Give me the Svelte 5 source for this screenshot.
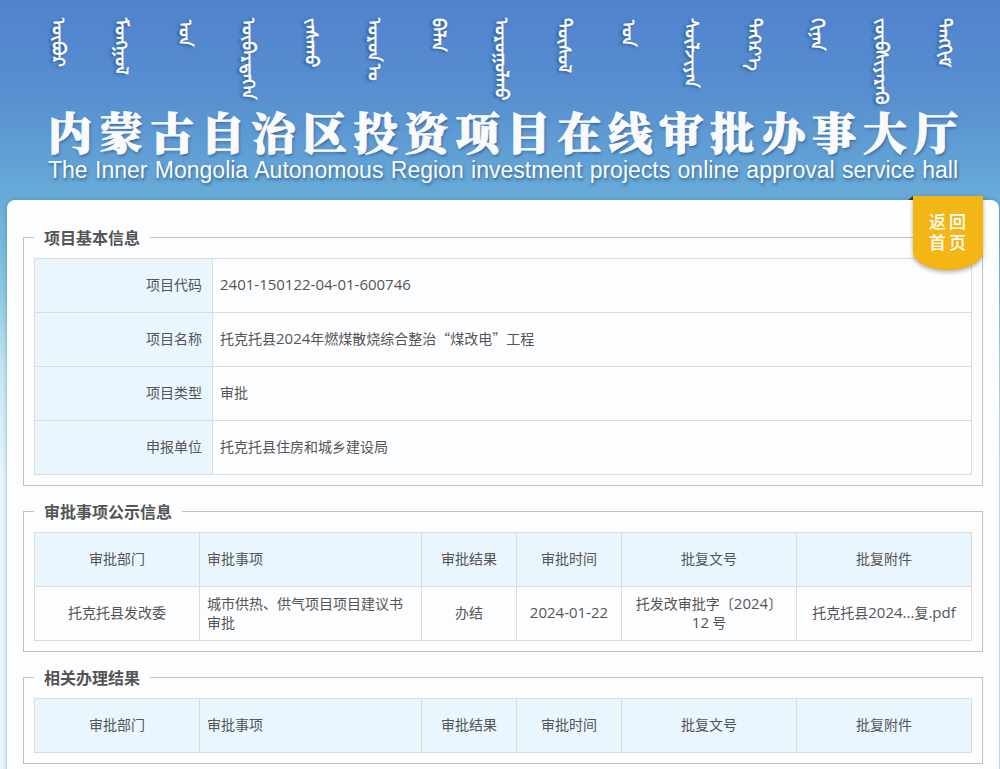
<script>
  const words = [
    'ᠥᠪᠥᠷ', 'ᠮᠣᠩᠭᠣᠯ', '\u202Fᠤᠨ', 'ᠥᠪᠡᠷᠲᠡᠭᠡᠨ', 'ᠵᠠᠰᠠᠬᠤ',
    'ᠣᠷᠣᠨ\u202Fᠤ', 'ᠪᠡᠯᠡᠨ', 'ᠣᠷᠣᠭᠤᠯᠬᠤ', 'ᠲᠥᠰᠥᠯ', '\u202Fᠤᠨ',
    'ᠰᠦᠯᠵᠢᠶᠡᠨ', 'ᠳᠡᠭᠡᠷ᠎ᠡ', 'ᠬᠢᠨᠠᠨ', 'ᠵᠥᠪᠰᠢᠶᠡᠷᠡᠬᠦ', 'ᠲᠠᠩᠬᠢᠮ'
  ];

  const columns = ['审批部门', '审批事项', '审批结果', '审批时间', '批复文号', '批复附件'];
</script>

{#snippet head()}
  <colgroup>
    <col class="dept" /><col /><col class="result" /><col class="date" /><col class="doc" /><col class="doc" />
  </colgroup>
  <thead>
    <tr>
      {#each columns as name}<th scope="col">{name}</th>{/each}
    </tr>
  </thead>
{/snippet}

<div class="page">
  <header>
    <p class="mongolian" lang="mn-Mong">
      {#each words as word}<span>{word}</span>{/each}
    </p>
    <h1>内蒙古自治区投资项目在线审批办事大厅</h1>
    <p class="english" lang="en">The Inner Mongolia Autonomous Region investment projects online approval service hall</p>
  </header>

  <main>
    <a class="ribbon" href="#home">返回<br />首页</a>

    <fieldset>
      <legend>项目基本信息</legend>
      <table class="info">
        <tbody>
          <tr><th scope="row">项目代码</th><td><span class="num">2401-150122-04-01-600746</span></td></tr>
          <tr><th scope="row">项目名称</th><td>托克托县<span class="num">2024</span>年燃煤散烧综合整治“煤改电”工程</td></tr>
          <tr><th scope="row">项目类型</th><td>审批</td></tr>
          <tr><th scope="row">申报单位</th><td>托克托县住房和城乡建设局</td></tr>
        </tbody>
      </table>
    </fieldset>

    <fieldset>
      <legend>审批事项公示信息</legend>
      <table class="list">
        {@render head()}
        <tbody>
          <tr>
            <td>托克托县发改委</td>
            <td>城市供热、供气项目项目建议书审批</td>
            <td>办结</td>
            <td><span class="num">2024-01-22</span></td>
            <td>托发改审批字〔<span class="num">2024</span>〕<span class="num">12</span> 号</td>
            <td><a href="#file">托克托县<span class="num">2024...</span>复<span class="num">.pdf</span></a></td>
          </tr>
        </tbody>
      </table>
    </fieldset>

    <fieldset>
      <legend>相关办理结果</legend>
      <table class="list">
        {@render head()}
      </table>
    </fieldset>
  </main>
</div>

<style>
  :global(body) {
    margin: 0;
    background: #e9f6fe;
  }

  .page {
    display: flex;
    flex-direction: column;
    box-sizing: border-box;
    min-height: 100vh;
    padding: 0 1px 0 7px;
    background: linear-gradient(#5182ce 0, #5890d0 100px, #68acd8 200px, #8cc8e2 290px, #c4e7f0 370px, #e9f6fe 480px);
    color: #555;
    font: 14px/19px "Noto Sans CJK SC", sans-serif;
  }

  header {
    box-sizing: border-box;
    height: 200px;
    padding: 18px 41px 0;
    color: #fafafa;
    text-shadow: 1px 2px 3px #1d4a80b0;
  }

  .mongolian {
    display: flex;
    justify-content: space-between;
    height: 88px;
    margin: 0;
    font-size: 18px;
    font-weight: 700;
    line-height: 24px;
  }

  .mongolian span {
    writing-mode: vertical-lr;
    white-space: nowrap;
  }

  h1 {
    margin: 0;
    font: 900 44px/50px "Noto Serif CJK SC", "Noto Sans CJK SC", serif;
    text-align-last: justify;
    -webkit-text-stroke: 1px #fafafa;
  }

  .english {
    margin: 0;
    font: 23px/28px "Liberation Sans", Arial, sans-serif;
    text-align-last: justify;
    white-space: nowrap;
  }

  main {
    position: relative;
    flex: 1;
    padding: 26px 16px 16px;
    border-radius: 8px 8px 0 0;
    background: #fcfdff;
    box-shadow: 0 0 4px #2c6a9a80;
  }

  fieldset {
    min-width: 0;
    margin: 0 0 14px;
    padding: 10px;
    border: 1px solid #c0c0c0;
  }

  legend {
    padding: 0 10px;
    font-size: 16px;
    font-weight: 700;
    line-height: 22px;
  }

  table {
    width: 100%;
    border-collapse: collapse;
    table-layout: fixed;
  }

  th,
  td {
    box-sizing: border-box;
    height: 54px;
    padding: 0 7px 2px;
    border: 1px solid #dcdcdc;
    font-weight: 400;
  }

  th {
    background: #e9f6fe;
  }

  .info th {
    width: 178px;
    padding-right: 10px;
    text-align: right;
  }

  .list th,
  .list td {
    text-align: center;
  }

  .list th:nth-child(2),
  .list td:nth-child(2) {
    text-align: left;
  }

  .dept { width: 165px; }
  .result { width: 95px; }
  .date { width: 105px; }
  .doc { width: 175px; }

  td a {
    color: inherit;
    text-decoration: none;
  }

  .num {
    font-family: "Open Sans", sans-serif;
    font-size: 15px;
  }

  .ribbon {
    position: absolute;
    top: -4px;
    right: 16px;
    box-sizing: border-box;
    width: 70px;
    height: 74px;
    padding: 14px 17px 0 16px;
    border-radius: 0 0 35px 35px / 0 0 18px 18px;
    background: #f4b614;
    box-shadow: 0 2px 4px #00000050;
    color: #fff;
    font-size: 17px;
    font-weight: 500;
    line-height: 21px;
    text-align: justify;
    text-align-last: justify;
    text-decoration: none;
  }

  .ribbon::before {
    content: "";
    position: absolute;
    top: 0;
    left: -5px;
    border-bottom: 4px solid #4a3505;
    border-left: 5px solid transparent;
  }
</style>
